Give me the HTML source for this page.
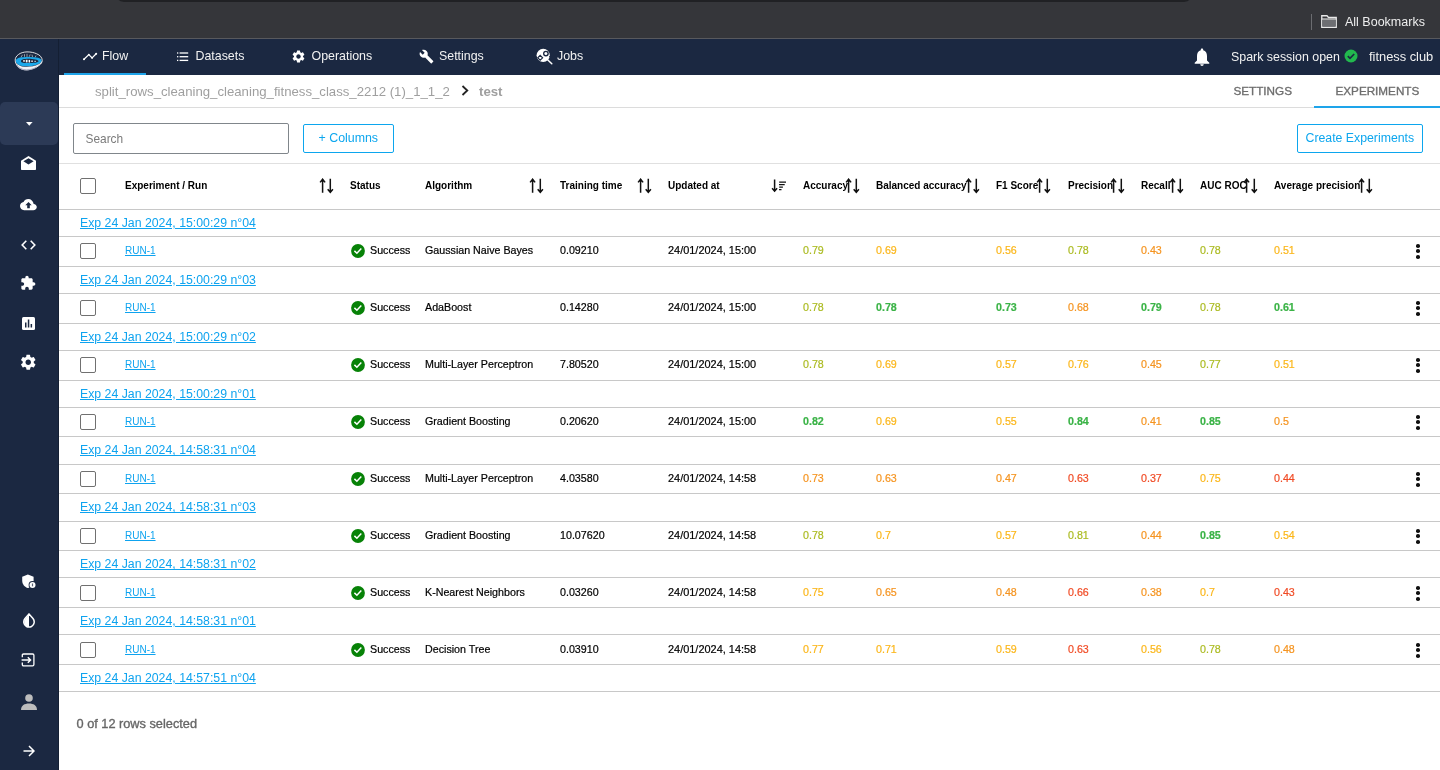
<!DOCTYPE html>
<html><head><meta charset="utf-8">
<style>
*{box-sizing:border-box;margin:0;padding:0}
html,body{width:1440px;height:770px;overflow:hidden;background:#fff;-webkit-font-smoothing:antialiased;font-family:"Liberation Sans",sans-serif;color:#1f1f1f}
.abs{position:absolute}
svg{display:block}
#chrome{position:absolute;left:0;top:0;width:1440px;height:38px;background:#35363a}
#omni{position:absolute;left:115px;top:-30px;width:1078px;height:32px;background:#202124;border-radius:0 0 9px 9px}
#chromeline{position:absolute;left:0;top:38px;width:1440px;height:1px;background:#58595d}
#nav{position:absolute;left:0;top:39px;width:1440px;height:36px;background:#1b2841}
#side{position:absolute;left:0;top:39px;width:59px;height:731px;background:#1b2841;border-right:1px solid #141f33}
.nt{position:absolute;top:48px;font-size:12.4px;line-height:16px;color:#f2f2f2;white-space:nowrap}
.si{position:absolute}
#crumb{position:absolute;left:95px;top:84px;font-size:13.2px;line-height:16px;color:#9f9f9f;white-space:nowrap}
.tab{position:absolute;top:84px;font-size:11.7px;line-height:14px;color:#6e6e6e;white-space:nowrap;-webkit-text-stroke:0.35px #6e6e6e}
.hl{position:absolute;left:59px;width:1381px;height:1px;background:#c8c8c8}
.cb{position:absolute;width:16px;height:16px;border:1.6px solid #707070;border-radius:2px}
.hd{position:absolute;top:179px;font-size:10px;line-height:13px;font-weight:bold;color:#000;white-space:nowrap}
.exp{position:absolute;left:80px;font-size:12.3px;line-height:15px;color:#0ea3ef;text-decoration:underline;white-space:nowrap}
.run{position:absolute;left:125px;font-size:10px;line-height:14px;color:#0ea3ef;text-decoration:underline;white-space:nowrap}
.td{position:absolute;font-size:10.7px;line-height:14px;color:#000;white-space:nowrap;-webkit-text-stroke:0.2px currentColor}
.td.b{font-weight:bold}
.ok{position:absolute}
.kebab{position:absolute;width:4px;height:14px}
.kebab i{display:block;width:3.6px;height:3.6px;border-radius:50%;background:#111;margin-bottom:1.9px}
</style></head>
<body><div id="root" style="position:absolute;left:0;top:0;width:1440px;height:770px;will-change:transform">
<div id="chrome"><div id="omni"></div>
  <div class="abs" style="left:1311px;top:14px;width:1px;height:16px;background:#6b6c70"></div>
  <div class="abs" style="left:1321px;top:15px"><svg width="16" height="13" viewBox="0 0 16 13"><path d="M0.75 0.75H6L7.5 2.5H15.25V12.25H0.75Z" fill="none" stroke="#e8e8e8" stroke-width="1.3"/><rect x="1.4" y="4.3" width="13.2" height="7.3" fill="#6d6e72"/><path d="M0.75 4H15.25" stroke="#e8e8e8" stroke-width="1.1"/></svg></div>
  <div class="abs" style="left:1345px;top:14.5px;font-size:12.5px;line-height:15px;color:#eeeeee;white-space:nowrap">All Bookmarks</div>
</div>
<div id="chromeline"></div>
<div id="nav">
</div>
<div id="side"></div>

<!-- logo -->
<div class="abs" style="left:14px;top:51px"><svg width="30" height="21" viewBox="0 0 30 21">
<path d="M1.2 9C1.2 5 6 1 13 0.9C17 0.9 20 1.6 22.5 2.7C26 4 28.2 6.5 28.2 9.5C28.2 13 24 15.5 20 17C17 18.3 14.5 18.9 12.5 18.9C6 18.9 1.2 14.5 1.2 9Z" fill="#1b2841" stroke="#f4f4f6" stroke-width="0.9"/>
<path d="M1.8 9.8C2 7.5 5 6.2 9 6.2C14 6.2 19 5.8 24 6.8C27 7.5 28 9 27.5 10.5C26.5 12.5 23 14 19 14.8C15 15.5 11 15.5 8 15C4 14.2 1.8 12.5 1.8 9.8Z" fill="#1ba8ea"/>
<path d="M1.4 10.6C2.5 15 7 18.9 12.5 18.9C17 18.9 22 16.8 25.5 14C27.5 12.5 28.3 11 28.2 9.6C27 12.5 23 14.6 19 15.3C15 15.9 11 15.9 8 15.4C4.5 14.7 2.2 13.2 1.4 10.6Z" fill="#f2f2f6"/>
<path d="M3.5 15.5C6 18 9 18.9 12.5 18.9C16 18.9 20 17.8 23 16" stroke="#a8acc2" stroke-width="1" fill="none"/>
<path d="M7 10.2C7 8.6 10 7.8 14.5 7.8C19 7.8 24.5 8.8 24.5 10.3C24.5 11.6 19 12.1 14.5 12.1C10 12.1 7 11.6 7 10.2Z" fill="#1b2841"/>
<g fill="#fff"><rect x="9.3" y="9" width="1.4" height="1.8"/><rect x="11.8" y="8.8" width="1.7" height="2.6"/><rect x="14.6" y="8.9" width="1.5" height="2.6"/><rect x="17.3" y="9.5" width="1.5" height="1.4"/><rect x="20.5" y="9.8" width="1.2" height="1.1"/></g>
<g stroke="#ffffff" stroke-width="0.6" fill="none" opacity="0.9"><path d="M7 6.2L8.5 3.8M10.5 5.8V3.2M13 6V2.8M15.2 5.8L16.2 3.5M18.5 6L18 3.6M21.2 6.3L22 4.5"/></g>
</svg></div>

<!-- nav tabs -->
<div class="si" style="left:82.8px;top:52px"><svg width="15" height="9" viewBox="0 0 15 9"><path d="M1 7.2L5.8 2.6L9.1 5.9L13.2 1.8" stroke="#fff" stroke-width="1.3" fill="none" stroke-linecap="round" stroke-linejoin="round"/><g fill="#fff"><circle cx="1" cy="7.2" r="1"/><circle cx="5.8" cy="2.6" r="0.9"/><circle cx="9.1" cy="5.9" r="0.9"/><circle cx="13.2" cy="1.8" r="1"/></g></svg></div>
<div class="nt" style="left:102px">Flow</div>
<div class="abs" style="left:64px;top:73px;width:82px;height:2px;background:#1ea4ea"></div>

<div class="si" style="left:177px;top:52px"><svg width="12" height="10" viewBox="0 0 12 10"><g fill="#fff"><rect x="0" y="0.35" width="1.3" height="1.3"/><rect x="0" y="4.05" width="1.3" height="1.3"/><rect x="0" y="7.75" width="1.3" height="1.3"/><rect x="2.6" y="0.35" width="8.6" height="1.3"/><rect x="2.6" y="4.05" width="8.6" height="1.3"/><rect x="2.6" y="7.75" width="8.6" height="1.3"/></g></svg></div>
<div class="nt" style="left:195.5px">Datasets</div>

<div class="si" style="left:290.5px;top:49px"><svg width="15" height="15" viewBox="0 0 24 24"><path fill="#fff" d="M19.14 12.94c.04-.3.06-.61.06-.94 0-.32-.02-.64-.07-.94l2.03-1.58a.49.49 0 0 0 .12-.61l-1.92-3.32a.488.488 0 0 0-.59-.22l-2.39.96c-.5-.38-1.03-.7-1.62-.94l-.36-2.54a.484.484 0 0 0-.48-.41h-3.84c-.24 0-.43.17-.47.41l-.36 2.54c-.59.24-1.13.57-1.62.94l-2.39-.96c-.22-.08-.47 0-.59.22L2.74 8.87c-.12.21-.08.47.12.61l2.03 1.58c-.05.3-.09.63-.09.94s.02.64.07.94l-2.03 1.58a.49.49 0 0 0-.12.61l1.92 3.32c.12.22.37.29.59.22l2.39-.96c.5.38 1.03.7 1.62.94l.36 2.54c.05.24.24.41.48.41h3.84c.24 0 .44-.17.47-.41l.36-2.54c.59-.24 1.13-.56 1.62-.94l2.39.96c.22.08.47 0 .59-.22l1.92-3.32c.12-.22.07-.47-.12-.61l-2.01-1.58zM12 15.6c-1.98 0-3.6-1.62-3.6-3.6s1.62-3.6 3.6-3.6 3.6 1.62 3.6 3.6-1.62 3.6-3.6 3.6z"/></svg></div>
<div class="nt" style="left:311.5px">Operations</div>

<div class="si" style="left:419px;top:49px"><svg width="15" height="15" viewBox="0 0 24 24"><path fill="#fff" d="M22.7 19l-9.1-9.1c.9-2.3.4-5-1.5-6.9-2-2-5-2.4-7.4-1.3L9 6 6 9 1.6 4.7C.4 7.1.9 10.1 2.9 12.1c1.9 1.9 4.6 2.4 6.9 1.5l9.1 9.1c.4.4 1 .4 1.4 0l2.3-2.3c.5-.4.5-1.1.1-1.4z"/></svg></div>
<div class="nt" style="left:439px">Settings</div>

<div class="si" style="left:536px;top:48px"><svg width="17" height="17" viewBox="0 0 17 17"><circle cx="7.2" cy="7.3" r="6.6" fill="#fff"/><path d="M11.6 11.7L15.8 15.8" stroke="#fff" stroke-width="1.5" stroke-linecap="round"/><circle cx="9.9" cy="5.6" r="2.9" fill="#1b2841"/><circle cx="9.9" cy="5.6" r="1.5" fill="#fff"/><path d="M4.2 7.4L6.6 9.8L4.2 12.2L1.8 9.8Z" fill="none" stroke="#1b2841" stroke-width="1.2"/><path d="M12.6 2.3l1 1M13.3 8.3l1 .8" stroke="#1b2841" stroke-width="1"/></svg></div>
<div class="nt" style="left:557px">Jobs</div>

<div class="si" style="left:1194px;top:48px"><svg width="16" height="18" viewBox="0 0 16 18"><path fill="#fff" d="M8 0.5c.8 0 1.2.5 1.2 1.2v.5C11.8 2.9 13 5 13 8v4.5l2.3 2.3v0.9H0.7v-.9L3 12.5V8c0-3 1.2-5.1 3.8-5.8v-.5C6.8 1 7.2.5 8 .5zM6.3 16.3h3.4c0 1-.8 1.6-1.7 1.6s-1.7-.6-1.7-1.6z"/></svg></div>
<div class="nt" style="left:1231px;top:48.7px">Spark session open</div>
<div class="si" style="left:1344px;top:49px"><svg width="14" height="14" viewBox="0 0 14 14"><circle cx="7" cy="7" r="6.5" fill="#22b84e"/><path d="M3.8 7.2L6 9.3L10.2 5" stroke="#1b2841" stroke-width="1.7" fill="none"/></svg></div>
<div class="nt" style="left:1369px;top:48.7px;font-size:12.85px">fitness club</div>

<!-- sidebar -->
<div class="abs" style="left:0;top:102px;width:58px;height:43px;background:#2c3a56;border-radius:5px"></div>
<div class="si" style="left:25.6px;top:121.7px"><svg width="7" height="4" viewBox="0 0 7 4"><path d="M0 0H6.6L3.3 3.7Z" fill="#fff"/></svg></div>
<div class="si" style="left:21px;top:156px"><svg width="15" height="14" viewBox="0 0 15 14"><path fill="#fff" d="M7.5 0L15 4.8V13c0 .6-.4 1-1 1H1c-.6 0-1-.4-1-1V4.8Z"/><path fill="#1b2841" d="M7.5 2.2L12.6 5.3L7.5 8.5L2.4 5.3Z"/></svg></div>
<div class="si" style="left:20px;top:198.8px"><svg width="17" height="13" viewBox="0 0 17 13"><path fill="#fff" d="M13.7 4.9C13.2 2.1 11 0 8.3 0 6.2 0 4.3 1.3 3.5 3.1 1.5 3.3 0 5 0 7.1 0 9.3 1.8 11.2 4.1 11.2h9.2c1.9 0 3.5-1.6 3.5-3.2 0-1.7-1.4-3-3.1-3.1z"/><path fill="#1b2841" d="M8.5 3L5.3 6.3H7.2V9.3H9.8V6.3H11.7Z"/></svg></div>
<div class="si" style="left:21px;top:240px"><svg width="15" height="10" viewBox="0 0 15 10"><path d="M5.3 0.8L1.2 5L5.3 9.2M9.7 0.8L13.8 5L9.7 9.2" stroke="#fff" stroke-width="1.6" fill="none"/></svg></div>
<div class="si" style="left:19.5px;top:275px"><svg width="16" height="16" viewBox="0 0 24 24"><path fill="#fff" d="M20.5 11H19V7c0-1.1-.9-2-2-2h-4V3.5C13 2.12 11.88 1 10.5 1S8 2.12 8 3.5V5H4c-1.1 0-1.99.9-1.99 2v3.8H3.5c1.49 0 2.7 1.21 2.7 2.7s-1.21 2.7-2.7 2.7H2V20c0 1.1.9 2 2 2h3.8v-1.5c0-1.49 1.21-2.7 2.7-2.7 1.49 0 2.7 1.21 2.7 2.7V22H17c1.1 0 2-.9 2-2v-4h1.5c1.38 0 2.5-1.12 2.5-2.5S21.88 11 20.5 11z"/></svg></div>
<div class="si" style="left:22px;top:317px"><svg width="13" height="13" viewBox="0 0 13 13"><rect width="13" height="13" rx="1.5" fill="#fff"/><g fill="#1b2841"><rect x="3" y="5.5" width="1.5" height="5"/><rect x="5.8" y="2.5" width="1.5" height="8"/><rect x="8.6" y="7" width="1.5" height="3.5"/></g></svg></div>
<div class="si" style="left:18.8px;top:352.5px"><svg width="18.5" height="18.5" viewBox="0 0 24 24"><path fill="#fff" d="M19.14 12.94c.04-.3.06-.61.06-.94 0-.32-.02-.64-.07-.94l2.03-1.58a.49.49 0 0 0 .12-.61l-1.92-3.32a.488.488 0 0 0-.59-.22l-2.39.96c-.5-.38-1.03-.7-1.620-.94l-.36-2.54a.484.484 0 0 0-.48-.41h-3.84c-.24 0-.43.17-.47.41l-.36 2.54c-.59.24-1.13.57-1.62.94l-2.39-.96c-.22-.08-.47 0-.59.22L2.74 8.87c-.12.21-.08.47.12.61l2.03 1.58c-.05.3-.09.63-.09.94s.02.64.07.94l-2.03 1.58a.49.49 0 0 0-.12.61l1.92 3.32c.12.22.37.29.59.22l2.39-.96c.5.38 1.03.7 1.62.94l.36 2.54c.05.24.24.41.48.41h3.84c.24 0 .44-.17.47-.41l.36-2.54c.59-.24 1.13-.56 1.62-.94l2.39.96c.22.08.47 0 .59-.22l1.92-3.32c.12-.22.07-.47-.12-.61l-2.010-1.58zM12 15.6c-1.98 0-3.6-1.62-3.6-3.6s1.62-3.6 3.6-3.6 3.6 1.62 3.6 3.6-1.62 3.6-3.6 3.6z"/></svg></div>

<div class="si" style="left:21.5px;top:574px"><svg width="15" height="15" viewBox="0 0 15 15"><path fill="#fff" d="M5.9 0.6L11.6 2.7V6.5C11.6 10.3 9.1 13.2 5.9 14.1 2.7 13.2 0.2 10.3 0.2 6.5V2.7Z"/><circle cx="10.5" cy="10.9" r="3.9" fill="#1b2841"/><circle cx="10.5" cy="10.9" r="3" fill="#fff"/><rect x="9.9" y="9.5" width="1.2" height="2.8" fill="#5a6275"/></svg></div>
<div class="si" style="left:22.5px;top:613px"><svg width="12" height="15" viewBox="0 0 12 15"><path d="M6 1L10 5.5C12 8 11.5 12 8.5 13.5 7 14.2 5 14.2 3.5 13.5 0.5 12 0 8 2 5.5Z" fill="none" stroke="#fff" stroke-width="1.5"/><path d="M6 1.5V14C4 14 1.2 12.5 1.2 9C1.2 7 2.5 5.5 6 1.5Z" fill="#fff"/></svg></div>
<div class="si" style="left:20.8px;top:652.9px"><svg width="14" height="14" viewBox="0 0 14 14"><path d="M1.3 4.2V2.3Q1.3 1 2.6 1H11.6Q12.9 1 12.9 2.3V11.5Q12.9 12.8 11.6 12.8H2.6Q1.3 12.8 1.3 11.5V9.5" stroke="#fff" stroke-width="1.3" fill="none"/><path d="M0.6 7H9.6M6.8 4.2L9.6 7L6.8 9.8" stroke="#fff" stroke-width="1.4" fill="none"/></svg></div>
<div class="si" style="left:21px;top:693.5px"><svg width="16" height="16" viewBox="0 0 16 16"><circle cx="8" cy="4" r="3.8" fill="#bdbdbd"/><path d="M0 16C0 11.5 3.5 9.5 8 9.5S16 11.5 16 16Z" fill="#bdbdbd"/></svg></div>
<div class="si" style="left:22.5px;top:745px"><svg width="12" height="12" viewBox="0 0 12 12"><path d="M0.5 6H11M6 1L11 6L6 11" stroke="#fff" stroke-width="1.5" fill="none"/></svg></div>

<!-- breadcrumb -->
<div id="crumb">split_rows_cleaning_cleaning_fitness_class_2212 (1)_1_1_2</div>
<div class="si" style="left:461px;top:85px"><svg width="8" height="11" viewBox="0 0 8 11"><path d="M1.5 1L6.3 5.5L1.5 10" stroke="#222" stroke-width="1.8" fill="none"/></svg></div>
<div class="abs" style="left:479px;top:84px;font-size:13.2px;line-height:16px;color:#9f9f9f;font-weight:bold">test</div>
<div class="tab" style="left:1233.5px">SETTINGS</div>
<div class="tab" style="left:1335.5px">EXPERIMENTS</div>
<div class="abs" style="left:59px;top:107px;width:1381px;height:1px;background:#dcdcdc"></div>
<div class="abs" style="left:1314px;top:106px;width:126px;height:2px;background:#1ea4ea"></div>

<!-- toolbar -->
<div class="abs" style="left:73px;top:123px;width:216px;height:31px;border:1px solid #80868b;border-radius:2px"></div>
<div class="abs" style="left:85.5px;top:132px;font-size:11.9px;line-height:14px;color:#7b7b7b">Search</div>
<div class="abs" style="left:303px;top:124px;width:91px;height:29px;border:1px solid #0ca6ee;border-radius:2px"></div>
<div class="abs" style="left:318.5px;top:130.5px;font-size:12.4px;line-height:15px;color:#0ca6ee;white-space:nowrap">+ Columns</div>
<div class="abs" style="left:1297px;top:124px;width:126px;height:29px;border:1px solid #0ca6ee;border-radius:2px"></div>
<div class="abs" style="left:1305.5px;top:130.5px;font-size:12.3px;line-height:15px;color:#0ca6ee;white-space:nowrap">Create Experiments</div>
<div class="abs" style="left:59px;top:163px;width:1381px;height:1px;background:#e0e0e0"></div>

<div class="cb" style="left:80px;top:178px"></div>
<div class="hd" style="left:125px">Experiment / Run</div>
<div class="hd" style="left:350px">Status</div>
<div class="hd" style="left:425px">Algorithm</div>
<div class="hd" style="left:560px">Training time</div>
<div class="hd" style="left:668px">Updated at</div>
<div class="hd" style="left:803px">Accuracy</div>
<div class="hd" style="left:876px">Balanced accuracy</div>
<div class="hd" style="left:996px">F1 Score</div>
<div class="hd" style="left:1068px">Precision</div>
<div class="hd" style="left:1141px">Recall</div>
<div class="hd" style="left:1200px">AUC ROC</div>
<div class="hd" style="left:1274px">Average precision</div>
<div class="abs" style="left:319px;top:178px"><svg width="15" height="16" viewBox="0 0 15 16"><path d="M3.6 1.6V14.7M1.1 4.4L3.6 1.3L6.1 4.4" stroke="#111" stroke-width="1.5" fill="none"/><path d="M2.2 3.3L3.6 0.4L5 3.3Z" fill="#111"/><path d="M11.3 0.7V13.6M8.7 11.2L11.3 14.3L13.9 11.2" stroke="#111" stroke-width="1.5" fill="none"/><path d="M9.9 12.2L11.3 14.9L12.7 12.2Z" fill="#111"/></svg></div>
<div class="abs" style="left:529px;top:178px"><svg width="15" height="16" viewBox="0 0 15 16"><path d="M3.6 1.6V14.7M1.1 4.4L3.6 1.3L6.1 4.4" stroke="#111" stroke-width="1.5" fill="none"/><path d="M2.2 3.3L3.6 0.4L5 3.3Z" fill="#111"/><path d="M11.3 0.7V13.6M8.7 11.2L11.3 14.3L13.9 11.2" stroke="#111" stroke-width="1.5" fill="none"/><path d="M9.9 12.2L11.3 14.9L12.7 12.2Z" fill="#111"/></svg></div>
<div class="abs" style="left:637px;top:178px"><svg width="15" height="16" viewBox="0 0 15 16"><path d="M3.6 1.6V14.7M1.1 4.4L3.6 1.3L6.1 4.4" stroke="#111" stroke-width="1.5" fill="none"/><path d="M2.2 3.3L3.6 0.4L5 3.3Z" fill="#111"/><path d="M11.3 0.7V13.6M8.7 11.2L11.3 14.3L13.9 11.2" stroke="#111" stroke-width="1.5" fill="none"/><path d="M9.9 12.2L11.3 14.9L12.7 12.2Z" fill="#111"/></svg></div>
<div class="abs" style="left:771px;top:179px"><svg width="16" height="15" viewBox="0 0 16 15"><path d="M3.6 0.4V11.6M1.1 9.3L3.6 12.2L6.1 9.3" stroke="#111" stroke-width="1.5" fill="none"/><path d="M2.3 10.6L3.6 12.9L4.9 10.6Z" fill="#111"/><path d="M8.2 3H15M8 5.5H13.7M8.2 8H11.9M8 10.5H10.5" stroke="#111" stroke-width="1.25" fill="none"/></svg></div>
<div class="abs" style="left:845px;top:178px"><svg width="15" height="16" viewBox="0 0 15 16"><path d="M3.6 1.6V14.7M1.1 4.4L3.6 1.3L6.1 4.4" stroke="#111" stroke-width="1.5" fill="none"/><path d="M2.2 3.3L3.6 0.4L5 3.3Z" fill="#111"/><path d="M11.3 0.7V13.6M8.7 11.2L11.3 14.3L13.9 11.2" stroke="#111" stroke-width="1.5" fill="none"/><path d="M9.9 12.2L11.3 14.9L12.7 12.2Z" fill="#111"/></svg></div>
<div class="abs" style="left:965px;top:178px"><svg width="15" height="16" viewBox="0 0 15 16"><path d="M3.6 1.6V14.7M1.1 4.4L3.6 1.3L6.1 4.4" stroke="#111" stroke-width="1.5" fill="none"/><path d="M2.2 3.3L3.6 0.4L5 3.3Z" fill="#111"/><path d="M11.3 0.7V13.6M8.7 11.2L11.3 14.3L13.9 11.2" stroke="#111" stroke-width="1.5" fill="none"/><path d="M9.9 12.2L11.3 14.9L12.7 12.2Z" fill="#111"/></svg></div>
<div class="abs" style="left:1036px;top:178px"><svg width="15" height="16" viewBox="0 0 15 16"><path d="M3.6 1.6V14.7M1.1 4.4L3.6 1.3L6.1 4.4" stroke="#111" stroke-width="1.5" fill="none"/><path d="M2.2 3.3L3.6 0.4L5 3.3Z" fill="#111"/><path d="M11.3 0.7V13.6M8.7 11.2L11.3 14.3L13.9 11.2" stroke="#111" stroke-width="1.5" fill="none"/><path d="M9.9 12.2L11.3 14.9L12.7 12.2Z" fill="#111"/></svg></div>
<div class="abs" style="left:1110px;top:178px"><svg width="15" height="16" viewBox="0 0 15 16"><path d="M3.6 1.6V14.7M1.1 4.4L3.6 1.3L6.1 4.4" stroke="#111" stroke-width="1.5" fill="none"/><path d="M2.2 3.3L3.6 0.4L5 3.3Z" fill="#111"/><path d="M11.3 0.7V13.6M8.7 11.2L11.3 14.3L13.9 11.2" stroke="#111" stroke-width="1.5" fill="none"/><path d="M9.9 12.2L11.3 14.9L12.7 12.2Z" fill="#111"/></svg></div>
<div class="abs" style="left:1169px;top:178px"><svg width="15" height="16" viewBox="0 0 15 16"><path d="M3.6 1.6V14.7M1.1 4.4L3.6 1.3L6.1 4.4" stroke="#111" stroke-width="1.5" fill="none"/><path d="M2.2 3.3L3.6 0.4L5 3.3Z" fill="#111"/><path d="M11.3 0.7V13.6M8.7 11.2L11.3 14.3L13.9 11.2" stroke="#111" stroke-width="1.5" fill="none"/><path d="M9.9 12.2L11.3 14.9L12.7 12.2Z" fill="#111"/></svg></div>
<div class="abs" style="left:1243px;top:178px"><svg width="15" height="16" viewBox="0 0 15 16"><path d="M3.6 1.6V14.7M1.1 4.4L3.6 1.3L6.1 4.4" stroke="#111" stroke-width="1.5" fill="none"/><path d="M2.2 3.3L3.6 0.4L5 3.3Z" fill="#111"/><path d="M11.3 0.7V13.6M8.7 11.2L11.3 14.3L13.9 11.2" stroke="#111" stroke-width="1.5" fill="none"/><path d="M9.9 12.2L11.3 14.9L12.7 12.2Z" fill="#111"/></svg></div>
<div class="abs" style="left:1358px;top:178px"><svg width="15" height="16" viewBox="0 0 15 16"><path d="M3.6 1.6V14.7M1.1 4.4L3.6 1.3L6.1 4.4" stroke="#111" stroke-width="1.5" fill="none"/><path d="M2.2 3.3L3.6 0.4L5 3.3Z" fill="#111"/><path d="M11.3 0.7V13.6M8.7 11.2L11.3 14.3L13.9 11.2" stroke="#111" stroke-width="1.5" fill="none"/><path d="M9.9 12.2L11.3 14.9L12.7 12.2Z" fill="#111"/></svg></div>
<div class="hl" style="top:209px"></div>
<div class="exp" style="top:215.9px">Exp 24 Jan 2024, 15:00:29 n°04</div>
<div class="hl" style="top:236px"></div>
<div class="cb" style="left:80px;top:243px"></div>
<div class="run" style="top:244px">RUN-1</div>
<div class="ok" style="left:351px;top:244px"><svg width="14" height="14" viewBox="0 0 14 14"><circle cx="7" cy="7" r="6.9" fill="#078207"/><path d="M3.4 6.9L5.9 9.3L10.3 4.6" stroke="#fff" stroke-width="1.5" fill="none"/></svg></div>
<div class="td" style="left:370px;top:243px">Success</div>
<div class="td" style="left:425px;top:243px">Gaussian Naive Bayes</div>
<div class="td" style="left:560px;top:243px">0.09210</div>
<div class="td" style="left:668px;top:243px;font-size:10.95px">24/01/2024, 15:00</div>
<div class="td m" style="left:803px;top:243px;color:#abbb22">0.79</div>
<div class="td m" style="left:876px;top:243px;color:#fbb61a">0.69</div>
<div class="td m" style="left:996px;top:243px;color:#fbb61a">0.56</div>
<div class="td m" style="left:1068px;top:243px;color:#abbb22">0.78</div>
<div class="td m" style="left:1141px;top:243px;color:#f59420">0.43</div>
<div class="td m" style="left:1200px;top:243px;color:#abbb22">0.78</div>
<div class="td m" style="left:1274px;top:243px;color:#fbb61a">0.51</div>
<div class="kebab" style="left:1416px;top:244px"><i></i><i></i><i></i></div>
<div class="hl" style="top:266px"></div>
<div class="exp" style="top:272.8px">Exp 24 Jan 2024, 15:00:29 n°03</div>
<div class="hl" style="top:293px"></div>
<div class="cb" style="left:80px;top:300px"></div>
<div class="run" style="top:301px">RUN-1</div>
<div class="ok" style="left:351px;top:301px"><svg width="14" height="14" viewBox="0 0 14 14"><circle cx="7" cy="7" r="6.9" fill="#078207"/><path d="M3.4 6.9L5.9 9.3L10.3 4.6" stroke="#fff" stroke-width="1.5" fill="none"/></svg></div>
<div class="td" style="left:370px;top:300px">Success</div>
<div class="td" style="left:425px;top:300px">AdaBoost</div>
<div class="td" style="left:560px;top:300px">0.14280</div>
<div class="td" style="left:668px;top:300px;font-size:10.95px">24/01/2024, 15:00</div>
<div class="td m" style="left:803px;top:300px;color:#abbb22">0.78</div>
<div class="td m b" style="left:876px;top:300px;color:#3bb347">0.78</div>
<div class="td m b" style="left:996px;top:300px;color:#3bb347">0.73</div>
<div class="td m" style="left:1068px;top:300px;color:#f59420">0.68</div>
<div class="td m b" style="left:1141px;top:300px;color:#3bb347">0.79</div>
<div class="td m" style="left:1200px;top:300px;color:#abbb22">0.78</div>
<div class="td m b" style="left:1274px;top:300px;color:#3bb347">0.61</div>
<div class="kebab" style="left:1416px;top:301px"><i></i><i></i><i></i></div>
<div class="hl" style="top:323px"></div>
<div class="exp" style="top:329.7px">Exp 24 Jan 2024, 15:00:29 n°02</div>
<div class="hl" style="top:350px"></div>
<div class="cb" style="left:80px;top:357px"></div>
<div class="run" style="top:358px">RUN-1</div>
<div class="ok" style="left:351px;top:358px"><svg width="14" height="14" viewBox="0 0 14 14"><circle cx="7" cy="7" r="6.9" fill="#078207"/><path d="M3.4 6.9L5.9 9.3L10.3 4.6" stroke="#fff" stroke-width="1.5" fill="none"/></svg></div>
<div class="td" style="left:370px;top:357px">Success</div>
<div class="td" style="left:425px;top:357px">Multi-Layer Perceptron</div>
<div class="td" style="left:560px;top:357px">7.80520</div>
<div class="td" style="left:668px;top:357px;font-size:10.95px">24/01/2024, 15:00</div>
<div class="td m" style="left:803px;top:357px;color:#abbb22">0.78</div>
<div class="td m" style="left:876px;top:357px;color:#fbb61a">0.69</div>
<div class="td m" style="left:996px;top:357px;color:#fbb61a">0.57</div>
<div class="td m" style="left:1068px;top:357px;color:#fbb61a">0.76</div>
<div class="td m" style="left:1141px;top:357px;color:#f59420">0.45</div>
<div class="td m" style="left:1200px;top:357px;color:#abbb22">0.77</div>
<div class="td m" style="left:1274px;top:357px;color:#fbb61a">0.51</div>
<div class="kebab" style="left:1416px;top:358px"><i></i><i></i><i></i></div>
<div class="hl" style="top:380px"></div>
<div class="exp" style="top:386.6px">Exp 24 Jan 2024, 15:00:29 n°01</div>
<div class="hl" style="top:407px"></div>
<div class="cb" style="left:80px;top:414px"></div>
<div class="run" style="top:415px">RUN-1</div>
<div class="ok" style="left:351px;top:415px"><svg width="14" height="14" viewBox="0 0 14 14"><circle cx="7" cy="7" r="6.9" fill="#078207"/><path d="M3.4 6.9L5.9 9.3L10.3 4.6" stroke="#fff" stroke-width="1.5" fill="none"/></svg></div>
<div class="td" style="left:370px;top:414px">Success</div>
<div class="td" style="left:425px;top:414px">Gradient Boosting</div>
<div class="td" style="left:560px;top:414px">0.20620</div>
<div class="td" style="left:668px;top:414px;font-size:10.95px">24/01/2024, 15:00</div>
<div class="td m b" style="left:803px;top:414px;color:#3bb347">0.82</div>
<div class="td m" style="left:876px;top:414px;color:#fbb61a">0.69</div>
<div class="td m" style="left:996px;top:414px;color:#fbb61a">0.55</div>
<div class="td m b" style="left:1068px;top:414px;color:#3bb347">0.84</div>
<div class="td m" style="left:1141px;top:414px;color:#f59420">0.41</div>
<div class="td m b" style="left:1200px;top:414px;color:#3bb347">0.85</div>
<div class="td m" style="left:1274px;top:414px;color:#f59420">0.5</div>
<div class="kebab" style="left:1416px;top:415px"><i></i><i></i><i></i></div>
<div class="hl" style="top:436px"></div>
<div class="exp" style="top:443.4px">Exp 24 Jan 2024, 14:58:31 n°04</div>
<div class="hl" style="top:464px"></div>
<div class="cb" style="left:80px;top:471px"></div>
<div class="run" style="top:472px">RUN-1</div>
<div class="ok" style="left:351px;top:472px"><svg width="14" height="14" viewBox="0 0 14 14"><circle cx="7" cy="7" r="6.9" fill="#078207"/><path d="M3.4 6.9L5.9 9.3L10.3 4.6" stroke="#fff" stroke-width="1.5" fill="none"/></svg></div>
<div class="td" style="left:370px;top:471px">Success</div>
<div class="td" style="left:425px;top:471px">Multi-Layer Perceptron</div>
<div class="td" style="left:560px;top:471px">4.03580</div>
<div class="td" style="left:668px;top:471px;font-size:10.95px">24/01/2024, 14:58</div>
<div class="td m" style="left:803px;top:471px;color:#f59420">0.73</div>
<div class="td m" style="left:876px;top:471px;color:#f59420">0.63</div>
<div class="td m" style="left:996px;top:471px;color:#f59420">0.47</div>
<div class="td m" style="left:1068px;top:471px;color:#f04a24">0.63</div>
<div class="td m" style="left:1141px;top:471px;color:#f04a24">0.37</div>
<div class="td m" style="left:1200px;top:471px;color:#fbb61a">0.75</div>
<div class="td m" style="left:1274px;top:471px;color:#f04a24">0.44</div>
<div class="kebab" style="left:1416px;top:472px"><i></i><i></i><i></i></div>
<div class="hl" style="top:493px"></div>
<div class="exp" style="top:500.3px">Exp 24 Jan 2024, 14:58:31 n°03</div>
<div class="hl" style="top:521px"></div>
<div class="cb" style="left:80px;top:528px"></div>
<div class="run" style="top:529px">RUN-1</div>
<div class="ok" style="left:351px;top:529px"><svg width="14" height="14" viewBox="0 0 14 14"><circle cx="7" cy="7" r="6.9" fill="#078207"/><path d="M3.4 6.9L5.9 9.3L10.3 4.6" stroke="#fff" stroke-width="1.5" fill="none"/></svg></div>
<div class="td" style="left:370px;top:528px">Success</div>
<div class="td" style="left:425px;top:528px">Gradient Boosting</div>
<div class="td" style="left:560px;top:528px">10.07620</div>
<div class="td" style="left:668px;top:528px;font-size:10.95px">24/01/2024, 14:58</div>
<div class="td m" style="left:803px;top:528px;color:#abbb22">0.78</div>
<div class="td m" style="left:876px;top:528px;color:#fbb61a">0.7</div>
<div class="td m" style="left:996px;top:528px;color:#fbb61a">0.57</div>
<div class="td m" style="left:1068px;top:528px;color:#abbb22">0.81</div>
<div class="td m" style="left:1141px;top:528px;color:#f59420">0.44</div>
<div class="td m b" style="left:1200px;top:528px;color:#3bb347">0.85</div>
<div class="td m" style="left:1274px;top:528px;color:#fbb61a">0.54</div>
<div class="kebab" style="left:1416px;top:529px"><i></i><i></i><i></i></div>
<div class="hl" style="top:550px"></div>
<div class="exp" style="top:557.2px">Exp 24 Jan 2024, 14:58:31 n°02</div>
<div class="hl" style="top:577px"></div>
<div class="cb" style="left:80px;top:585px"></div>
<div class="run" style="top:586px">RUN-1</div>
<div class="ok" style="left:351px;top:586px"><svg width="14" height="14" viewBox="0 0 14 14"><circle cx="7" cy="7" r="6.9" fill="#078207"/><path d="M3.4 6.9L5.9 9.3L10.3 4.6" stroke="#fff" stroke-width="1.5" fill="none"/></svg></div>
<div class="td" style="left:370px;top:585px">Success</div>
<div class="td" style="left:425px;top:585px">K-Nearest Neighbors</div>
<div class="td" style="left:560px;top:585px">0.03260</div>
<div class="td" style="left:668px;top:585px;font-size:10.95px">24/01/2024, 14:58</div>
<div class="td m" style="left:803px;top:585px;color:#fbb61a">0.75</div>
<div class="td m" style="left:876px;top:585px;color:#f59420">0.65</div>
<div class="td m" style="left:996px;top:585px;color:#f59420">0.48</div>
<div class="td m" style="left:1068px;top:585px;color:#f04a24">0.66</div>
<div class="td m" style="left:1141px;top:585px;color:#f59420">0.38</div>
<div class="td m" style="left:1200px;top:585px;color:#fbb61a">0.7</div>
<div class="td m" style="left:1274px;top:585px;color:#f04a24">0.43</div>
<div class="kebab" style="left:1416px;top:586px"><i></i><i></i><i></i></div>
<div class="hl" style="top:607px"></div>
<div class="exp" style="top:614.0px">Exp 24 Jan 2024, 14:58:31 n°01</div>
<div class="hl" style="top:634px"></div>
<div class="cb" style="left:80px;top:642px"></div>
<div class="run" style="top:643px">RUN-1</div>
<div class="ok" style="left:351px;top:643px"><svg width="14" height="14" viewBox="0 0 14 14"><circle cx="7" cy="7" r="6.9" fill="#078207"/><path d="M3.4 6.9L5.9 9.3L10.3 4.6" stroke="#fff" stroke-width="1.5" fill="none"/></svg></div>
<div class="td" style="left:370px;top:642px">Success</div>
<div class="td" style="left:425px;top:642px">Decision Tree</div>
<div class="td" style="left:560px;top:642px">0.03910</div>
<div class="td" style="left:668px;top:642px;font-size:10.95px">24/01/2024, 14:58</div>
<div class="td m" style="left:803px;top:642px;color:#fbb61a">0.77</div>
<div class="td m" style="left:876px;top:642px;color:#fbb61a">0.71</div>
<div class="td m" style="left:996px;top:642px;color:#fbb61a">0.59</div>
<div class="td m" style="left:1068px;top:642px;color:#f04a24">0.63</div>
<div class="td m" style="left:1141px;top:642px;color:#fbb61a">0.56</div>
<div class="td m" style="left:1200px;top:642px;color:#abbb22">0.78</div>
<div class="td m" style="left:1274px;top:642px;color:#f59420">0.48</div>
<div class="kebab" style="left:1416px;top:643px"><i></i><i></i><i></i></div>
<div class="hl" style="top:664px"></div>
<div class="exp" style="top:670.9px">Exp 24 Jan 2024, 14:57:51 n°04</div>
<div class="hl" style="top:691px"></div>

<div class="abs" style="left:76.5px;top:715.5px;font-size:12.75px;line-height:15px;color:#666;white-space:nowrap;-webkit-text-stroke:0.35px #666">0 of 12 rows selected</div>
</div></body></html>
